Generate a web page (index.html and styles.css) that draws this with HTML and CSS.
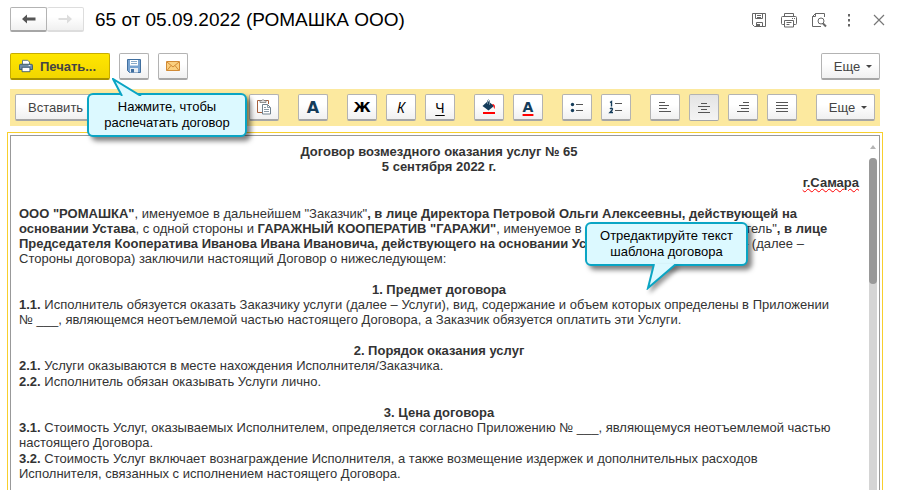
FILE: index.html
```html
<!DOCTYPE html>
<html lang="ru">
	<head>
		<meta charset="UTF-8" />
		<meta name="viewport" content="width=device-width, initial-scale=1.0" />
		<title>65 от 05.09.2022 (РОМАШКА ООО)</title>
		<link rel="stylesheet" href="styles.css">
	</head>
	<body>
		<div class="page">
			<header class="titlebar">
				<div class="history">
					<button class="btn" aria-label="Назад">
						<svg width="14" height="10" viewBox="0 0 14 10"><path d="M0 5l5-4.500v3h8.500v3H5v3z" fill="#555" /></svg>
					</button>
					<button class="btn" aria-label="Вперед" disabled>
						<svg width="14" height="10" viewBox="0 0 14 10"><path d="M14 5L9 .5v3.500H.5v2H9v3.500z" fill="#ddd" /></svg>
					</button>
				</div>
				<h1>65 от 05.09.2022 (РОМАШКА ООО)</h1>
				<div class="window-tools">
					<button aria-label="Сохранить">
						<svg width="16" height="16" viewBox="0 0 16 16" fill="none" stroke="#666"><path d="M1.500 1.500h13v13h-11l-2-2zM4.500 1.500v5h7v-5M6 3.500h4M6 5.500h4M5.500 14.500v-4h6v4" /><path d="M6 12h3v2.500H6z" fill="#666" stroke="none" /></svg>
					</button>
					<button aria-label="Печать">
						<svg width="16" height="16" viewBox="0 0 16 16" fill="none" stroke="#666"><path d="M3.500 4.500v-3h9v3M3.500 12.500h-2q-1 0-1-1v-6q0-1 1-1h13q1 0 1 1v6q0 1-1 1h-2M3.500 8.500h9v6.500h-9zM5.500 10.500h5M5.500 12.500h3M11 6.500h1M13 6.500h1" /></svg>
					</button>
					<button aria-label="Предварительный просмотр">
						<svg width="16" height="16" viewBox="0 0 16 16" fill="none" stroke="#666"><path d="M13.500 5V1.500h-9l-3 3v10H10M1.500 4.500h3v-3" /><circle cx="10" cy="9" r="3" /><path d="M12 11.500l3 3" stroke-width="2" /></svg>
					</button>
					<button aria-label="Действия">
						<svg width="16" height="16" viewBox="0 0 16 16" fill="#666"><path d="M7 2h2v2.500H7zM7 7h2v2.500H7zM7 12h2v2.500H7z" /></svg>
					</button>
					<button aria-label="Закрыть">
						<svg width="16" height="16" viewBox="0 0 16 16" fill="none" stroke="#777" stroke-width="1.200"><path d="M3 3l10 10M13 3L3 13" /></svg>
					</button>
				</div>
			</header>

			<div class="commands">
				<button class="btn print">
					<svg width="14" height="14" viewBox="0 0 16 16"><path d="M4 6V1.500h6l2 2V6" fill="#fff" stroke="#4d6a85" /><path d="M2 6h12q1.500 0 1.500 1.500V12H.5V7.500Q.5 6 2 6z" fill="#6d8ba6" stroke="#35536f" /><path d="M3.500 9.500h9v5h-9z" fill="#fff" stroke="#35536f" /><path d="M11 7.500h2" stroke="#fff" /></svg>
					Печать...
				</button>
				<button class="btn tool" aria-label="Записать">
					<svg width="16" height="16" viewBox="0 0 16 16"><path d="M1.500 1.500h13v13h-11l-2-2z" fill="#78a3d0" stroke="#406f9f" /><path d="M4 2h8v5.500H4z" fill="#fff" /><path d="M5 3.500h6M5 5.500h6" stroke="#8aabc9" /><path d="M4 10h8v4.500H4z" fill="#e8eef4" /><path d="M5 11h3v3.500H5z" fill="#406f9f" /></svg>
				</button>
				<button class="btn tool" aria-label="Отправить по почте">
					<svg width="16" height="16" viewBox="0 0 16 16"><path d="M1.500 3.500h13v9h-13z" fill="#fbcf7e" stroke="#d18a35" /><path d="M2 4l6 5 6-5M2 12.500l4-5M14 12.500l-4-5" fill="none" stroke="#d18a35" /></svg>
				</button>
				<button class="btn more">Еще <i class="caret"></i></button>
			</div>

			<div class="toolbar">
				<div class="group insert">
					<button class="btn">Вставить</button>
				</div>
				<div class="group">
					<button class="btn tool" aria-label="Вставить из буфера">
						<svg width="16" height="16" viewBox="0 0 16 16"><path d="M6 13.500H1.500v-12h11V5" fill="none" stroke="#a55f3c" /><path d="M4 3.500v-2h2q1-2 2 0h2v2z" fill="#ddd" stroke="#777" stroke-width=".8" /><path d="M6.500 5.500h5l3 3v6.500h-8z" fill="#fff" stroke="#71818d" /><path d="M11.500 5.500v3h3M8 8.500h2M8 10.500h5M8 12.500h5" fill="none" stroke="#8b9ba7" /></svg>
					</button>
				</div>
				<div class="group">
					<button class="btn tool letter" aria-label="Шрифт">A</button>
				</div>
				<div class="group">
					<button class="btn tool bold" aria-label="Жирный">Ж</button>
					<button class="btn tool italic" aria-label="Курсив">К</button>
					<button class="btn tool underline" aria-label="Подчеркнутый">Ч</button>
				</div>
				<div class="group">
					<button class="btn tool" aria-label="Цвет фона">
						<svg width="16" height="16" viewBox="0 0 16 16"><path d="M7 2l6 5-5.500 4.500L1.500 7z" fill="#143c5a" /><path d="M6.500 5V1.500q1-1.500 2 0V6" fill="none" stroke="#6b8699" /><path d="M11 5q4 0 2.500 5-1-1-1-3z" fill="#f00" /><path d="M2 13h12v2H2z" fill="#f00" /></svg>
					</button>
					<button class="btn tool letter color" aria-label="Цвет текста">A</button>
				</div>
				<div class="group">
					<button class="btn tool" aria-label="Маркированный список">
						<svg width="16" height="16" viewBox="0 0 16 16"><path d="M7 5.500h7M7 11.500h7" stroke="#555" /><circle cx="3.500" cy="5.500" r="1.700" fill="#143c5a" /><circle cx="3.500" cy="11.500" r="1.700" fill="#143c5a" /></svg>
					</button>
					<button class="btn tool" aria-label="Нумерованный список">
						<svg width="16" height="16" viewBox="0 0 16 16" fill="none"><path d="M7 4.500h7M7 11.500h7" stroke="#555" /><path d="M2 3.500l1.500-1v5M2 10q1.500-1.500 2.500 0 0 1-2.500 3.500h3" stroke="#143c5a" stroke-width="1.400" /></svg>
					</button>
				</div>
				<div class="group">
					<button class="btn tool" aria-label="По левому краю">
						<svg width="16" height="16" viewBox="0 0 16 16" stroke="#555"><path d="M2 3.500h6M2 6.500h10M2 9.500h8M2 12.500h12" /></svg>
					</button>
					<button class="btn tool pressed" aria-label="По центру" aria-pressed="true">
						<svg width="16" height="16" viewBox="0 0 16 16" stroke="#555"><path d="M5 3.500h6M2 6.500h12M5 9.500h6M2 12.500h12" /></svg>
					</button>
					<button class="btn tool" aria-label="По правому краю">
						<svg width="16" height="16" viewBox="0 0 16 16" stroke="#555"><path d="M8 3.500h6M4 6.500h10M6 9.500h8M2 12.500h12" /></svg>
					</button>
					<button class="btn tool" aria-label="По ширине">
						<svg width="16" height="16" viewBox="0 0 16 16" stroke="#555"><path d="M2 3.500h12M2 6.500h12M2 9.500h12M2 12.500h12" /></svg>
					</button>
				</div>
				<button class="btn more">Еще <i class="caret"></i></button>
			</div>

			<div class="editor">
				<div class="editor-inner">
					<article class="document">
						<section>
							<h2>Договор возмездного оказания услуг № 65</h2>
							<h2>5 сентября 2022 г.</h2>
							<p class="city"><span>г.Самара</span></p>
						</section>
						<section>
							<p><b>ООО "РОМАШКА"</b>, именуемое в дальнейшем "Заказчик"<b>, в лице Директора Петровой Ольги Алексеевны, действующей на<br>основании Устава</b>, с одной стороны и <b>ГАРАЖНЫЙ КООПЕРАТИВ "ГАРАЖИ"</b>, именуемое в дальнейшем как "Исполнитель"<b>, в лице<br>Председателя Кооператива Иванова Ивана Ивановича, действующего на основании Устава</b>, а с другой стороны – (далее –<br>Стороны договора) заключили настоящий Договор о нижеследующем:</p>
						</section>
						<section>
							<h2>1. Предмет договора</h2>
							<p><b>1.1.</b> Исполнитель обязуется оказать Заказчику услуги (далее – Услуги), вид, содержание и объем которых определены в Приложении<br>№ ___, являющемся неотъемлемой частью настоящего Договора, а Заказчик обязуется оплатить эти Услуги.</p>
						</section>
						<section>
							<h2>2. Порядок оказания услуг</h2>
							<p><b>2.1.</b> Услуги оказываются в месте нахождения Исполнителя/Заказчика.</p>
							<p><b>2.2.</b> Исполнитель обязан оказывать Услуги лично.</p>
						</section>
						<section>
							<h2>3. Цена договора</h2>
							<p><b>3.1.</b> Стоимость Услуг, оказываемых Исполнителем, определяется согласно Приложению № ___, являющемуся неотъемлемой частью<br>настоящего Договора.</p>
							<p><b>3.2.</b> Стоимость Услуг включает вознаграждение Исполнителя, а также возмещение издержек и дополнительных расходов<br>Исполнителя, связанных с исполнением настоящего Договора.</p>
						</section>
					</article>
					<div class="scrollbar">
						<i class="scroll-up"></i>
						<div class="track"><div class="thumb"></div></div>
					</div>
				</div>
			</div>
		</div>

		<div class="callout callout-print">
			<svg width="34" height="18" viewBox="0 0 34 18"><path d="M10 18L1 1l28 17" fill="#dcf9ff" stroke="#0aa5c4" stroke-width="2" /></svg>
			Нажмите, чтобы<br>распечатать договор
		</div>
		<div class="callout callout-edit">
			<svg width="34" height="26" viewBox="0 0 34 26"><path d="M8 0L2 24 30 0" fill="#dcf9ff" stroke="#0aa5c4" stroke-width="2" /></svg>
			Отредактируйте текст<br>шаблона договора
		</div>
	</body>
</html>
```
FILE: styles.css
```css
* {
	margin: 0;
	padding: 0;
	box-sizing: border-box;
}
body {
	background-color: #fff;
	color: #333;
	font-family: "Liberation Sans", Arial, sans-serif;
	font-size: 13px;
}
button {
	font-family: inherit;
	color: inherit;
	border: none;
	background: none;
}
svg {
	display: block;
	flex: none;
}
.page {
	height: 100vh;
	display: flex;
	flex-direction: column;
	overflow: hidden;
	padding: 7px 17px 0 7px;
}
.btn {
	height: 27px;
	display: flex;
	align-items: center;
	justify-content: center;
	border: 1px solid #b3b3b3;
	border-bottom: 2px solid #a6a6a6;
	border-radius: 2px;
	background: linear-gradient(#fff 40%, #f0f0f0);
	font-size: 13px;
	color: #444;
}
.tool {
	width: 30px;
}
.titlebar {
	display: flex;
	align-items: center;
	height: 25px;
	padding-left: 3px;
}
.history {
	display: flex;
	margin-right: 11px;
}
.history .btn {
	width: 37px;
	height: 25px;
}
.history .btn:disabled {
	border-color: #ddd;
	border-left: none;
}
.titlebar h1 {
	font-size: 19px;
	line-height: 22px;
	font-weight: normal;
	color: #000;
}
.window-tools {
	margin-left: auto;
	margin-right: -4px;
	display: flex;
	gap: 14px;
}
.commands {
	display: flex;
	gap: 9px;
	padding: 0 3px;
	margin: 21px 0 9px;
}
.print {
	width: 100px;
	gap: 7px;
	padding-right: 5px;
	border-color: #c7ac00;
	border-bottom-color: #a89200;
	background: linear-gradient(#ffe600, #f2d600);
	font-weight: bold;
}
.more {
	width: 59px;
	margin-left: auto;
	gap: 6px;
	padding-left: 5px;
}
.caret {
	border: 3px solid transparent;
	border-top-color: #444;
	border-bottom: none;
}
.toolbar {
	display: flex;
	align-items: center;
	gap: 19px;
	height: 37px;
	margin: 0 3px;
	padding: 0 5px;
	background-color: #fce99f;
}
.group {
	display: flex;
	gap: 9px;
}
.insert {
	width: 215px;
}
.insert .btn {
	width: 120px;
	justify-content: flex-start;
	padding-left: 12px;
}
.letter {
	font: bold 16px "DejaVu Sans", sans-serif;
	color: #143c5a;
}
.color {
	font-size: 14px;
	line-height: 14px;
	text-decoration: underline 2px #f00;
	text-underline-offset: 2px;
}
.bold {
	font: bold 14px "DejaVu Sans", sans-serif;
	color: #000;
}
.italic {
	font: italic 14px "Noto Sans", sans-serif;
	color: #000;
}
.underline {
	font: 14px "Noto Sans", sans-serif;
	color: #000;
	text-decoration: underline;
	text-underline-offset: 2px;
}
.pressed {
	background: linear-gradient(#e4e4e4, #f4f4f4);
	border-bottom-width: 1px;
}
.editor {
	flex: 1;
	min-height: 0;
	margin-top: 6px;
	padding: 2px 2px 0;
	border: 1px solid #f8cf2d;
	border-bottom: none;
}
.editor-inner {
	height: 100%;
	display: flex;
	border: 1px solid #999;
	border-bottom: none;
}
.document {
	flex: 1;
	min-width: 0;
	overflow: hidden;
	padding: 8px 10px 0 8px;
	line-height: 15px;
	white-space: nowrap;
}
.document section {
	margin-bottom: 16px;
}
.document h2 {
	font-size: 13px;
	text-align: center;
}
.document p + p,
.document .city {
	margin-top: 1px;
}
.city {
	text-align: right;
	font-weight: bold;
}
.city span {
	text-decoration: underline wavy #f00 1px;
}
.scrollbar {
	width: 10px;
	padding-right: 2px;
	display: flex;
	flex-direction: column;
	align-items: center;
}
.scroll-up {
	margin: 9px 0;
	border: 3px solid transparent;
	border-top: none;
	border-bottom: 4px solid #b5b5b5;
}
.track {
	flex: 1;
	width: 8px;
	border-radius: 4px 4px 0 0;
	background-color: #d5d5d5;
}
.thumb {
	height: 38%;
	border-radius: 4px;
	background-color: #999;
}
.callout {
	position: absolute;
	padding: 4px 0;
	border: 2px solid #0aa5c4;
	border-radius: 6px;
	background-color: #dcf9ff;
	box-shadow: 4px 4px 5px rgba(0, 0, 0, 0.5);
	color: #000;
	text-align: center;
	line-height: 16px;
}
.callout svg {
	position: absolute;
}
.callout-print {
	left: 87px;
	top: 93px;
	width: 160px;
}
.callout-print svg {
	left: 23px;
	top: -17px;
}
.callout-edit {
	left: 585px;
	top: 222px;
	width: 163px;
}
.callout-edit svg {
	left: 59px;
	top: 40px;
	filter: drop-shadow(3px 3px 2px rgba(0, 0, 0, 0.4));
}
```
